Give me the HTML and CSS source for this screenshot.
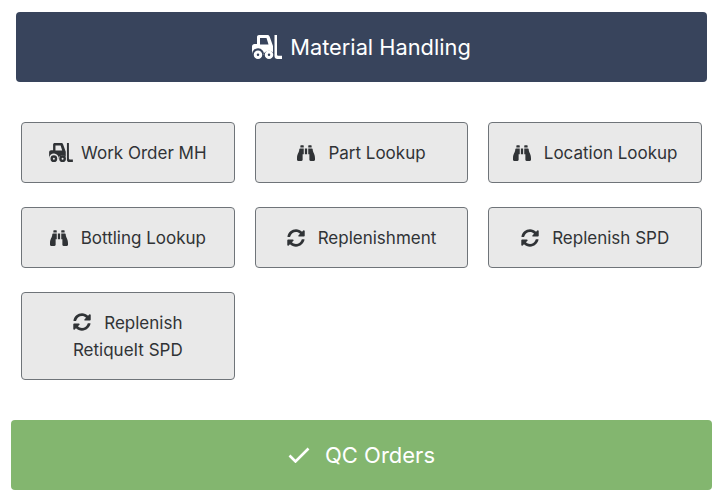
FILE: index.html
```html
<!DOCTYPE html>
<html lang="en">
<head>
  <meta charset="UTF-8">
  <meta name="viewport" content="width=device-width, initial-scale=1.0">
  <title>Material Handling</title>
  <link rel="stylesheet" href="styles.css">
</head>
<body>

<svg class="icon-defs" aria-hidden="true">
  <symbol id="forklift" viewBox="0 0 30 24">
    <path fill-rule="evenodd" d="M7 0h8.500c1 0 1.800.6 2.100 1.500l3.400 9.500v6.500a6 6 0 0 0-9.700 2H12a6 6 0 0 0-12-.5V11.500C0 10.100 1.100 9 2.500 9H5V2c0-1.100.9-2 2-2zM8 3v6.500h8.500L14.500 3z"/>
    <path fill-rule="evenodd" d="M6 15.500a4.250 4.250 0 1 1 0 8.500 4.250 4.250 0 0 1 0-8.500zm0 3a1.250 1.250 0 1 0 0 2.500 1.250 1.250 0 0 0 0-2.500zM17 15.500a4.250 4.250 0 1 1 0 8.500 4.250 4.250 0 0 1 0-8.500zm0 3a1.250 1.250 0 1 0 0 2.500 1.250 1.250 0 0 0 0-2.500z"/>
    <path d="M22.500 0h2.500v19.500c0 .8.400 1.200 1.200 1.200h3.800V24h-4.500c-1.800 0-3-1.200-3-3z"/>
  </symbol>
  <symbol id="binoculars" viewBox="0 0 512 512">
    <path d="M416 48c0-8.840-7.160-16-16-16h-64c-8.840 0-16 7.160-16 16v48h96V48zM63.910 159.990C61.400 253.840 3.460 274.220 0 404v44c0 17.670 14.330 32 32 32h96c17.670 0 32-14.330 32-32V288h32V128H95.840c-17.630 0-31.450 14.370-31.930 31.990zm384.180 0c-.48-17.620-14.300-31.990-31.930-31.990H320v160h32v160c0 17.670 14.330 32 32 32h96c17.670 0 32-14.330 32-32v-44c-3.460-129.780-61.400-150.160-63.910-244.010zM176 32h-64c-8.840 0-16 7.160-16 16v48h96V48c0-8.840-7.160-16-16-16zm48 256h64V128h-64v160z"/>
  </symbol>
  <symbol id="sync" viewBox="0 0 512 512">
    <path d="M370.720 133.280C339.458 104.008 298.888 87.962 255.848 88c-77.458.068-144.328 53.178-162.791 126.850-1.344 5.363-6.122 9.150-11.651 9.150H24.103c-7.498 0-13.194-6.807-11.807-14.176C33.933 94.924 134.813 8 256 8c66.448 0 126.791 26.136 171.315 68.685L463.030 40.970C478.149 25.851 504 36.559 504 57.941V192c0 13.255-10.745 24-24 24H345.941c-21.382 0-32.090-25.851-16.971-40.971l41.750-41.749zM32 296h134.059c21.382 0 32.090 25.851 16.971 40.971l-41.750 41.750c31.262 29.273 71.835 45.319 114.876 45.280 77.418-.07 144.315-53.144 162.787-126.849 1.344-5.363 6.122-9.150 11.651-9.150h57.304c7.498 0 13.194 6.807 11.807 14.176C478.067 417.076 377.187 504 256 504c-66.448 0-126.791-26.136-171.315-68.685L48.970 471.030C33.851 486.149 8 475.441 8 454.059V320c0-13.255 10.745-24 24-24z"/>
  </symbol>
</svg>

<main class="menu-page">
  <div class="menu-header">
    <svg class="header-icon"><use href="#forklift"></use></svg>
    <span>Material Handling</span>
  </div>

  <div class="menu-grid">
    <a class="menu-btn"><svg class="icon-forklift"><use href="#forklift"></use></svg>Work Order MH</a>
    <a class="menu-btn"><svg class="icon-small"><use href="#binoculars"></use></svg>Part Lookup</a>
    <a class="menu-btn"><svg class="icon-small"><use href="#binoculars"></use></svg>Location Lookup</a>
    <a class="menu-btn"><svg class="icon-small"><use href="#binoculars"></use></svg>Bottling Lookup</a>
    <a class="menu-btn"><svg class="icon-small"><use href="#sync"></use></svg>Replenishment</a>
    <a class="menu-btn"><svg class="icon-small"><use href="#sync"></use></svg>Replenish SPD</a>
    <a class="menu-btn menu-btn-tall"><span><svg class="icon-small"><use href="#sync"></use></svg>Replenish RetiqueIt SPD</span></a>
  </div>

  <div class="qc-button">
    <svg class="check-icon" viewBox="0 0 22 16"><polyline points="1.500,8.500 7.500,14.500 20.500,1.500"></polyline></svg>
    <span>QC Orders</span>
  </div>
</main>

</body>
</html>
```

FILE: styles.css
```css
body {
  margin: 0;
  background-color: #fff;
  font-family: Inter, sans-serif;
}

.icon-defs {
  display: none;
}

.menu-page {
  display: flex;
  flex-direction: column;
  padding: 12px 9px 12px 11px;
}

.menu-header {
  display: flex;
  align-items: center;
  justify-content: center;
  height: 70px;
  margin: 0 5px;
  border-radius: 4px;
  background-color: #38445c;
  color: #fff;
  font-size: 21.800px;
}

.header-icon {
  width: 30px;
  height: 24px;
  margin-right: 8px;
  fill: #fff;
}

.menu-grid {
  display: grid;
  grid-template-columns: repeat(3, minmax(0, 1fr));
  gap: 24px 20px;
  margin: 40px 10px 40px 10px;
}

.menu-btn {
  display: flex;
  align-items: center;
  justify-content: center;
  box-sizing: border-box;
  height: 61px;
  padding: 2px 12px 0;
  border: 1px solid #6f7479;
  border-radius: 4px;
  background-color: #e9e9e9;
  color: #303336;
  font-size: 17px;
  line-height: 27px;
  text-align: center;
  white-space: nowrap;
}

.menu-btn-tall {
  height: 88px;
  padding: 2px 30px 0;
  white-space: normal;
}

.icon-forklift {
  flex: none;
  width: 24px;
  height: 19px;
  margin: -2px 8px 0 0;
  fill: #303336;
}

.icon-small {
  flex: none;
  width: 18px;
  height: 18px;
  margin: -2px 13px 0 0;
  fill: #303336;
  vertical-align: -2px;
}

.menu-btn-tall .icon-small {
  margin-top: 0;
}

.qc-button {
  display: flex;
  align-items: center;
  justify-content: center;
  height: 70px;
  border-radius: 4px;
  background-color: #83b66f;
  color: #fff;
  font-size: 22px;
}

.check-icon {
  width: 22px;
  height: 16px;
  margin-right: 15px;
  fill: none;
  stroke: #fff;
  stroke-width: 2.600;
}
```
